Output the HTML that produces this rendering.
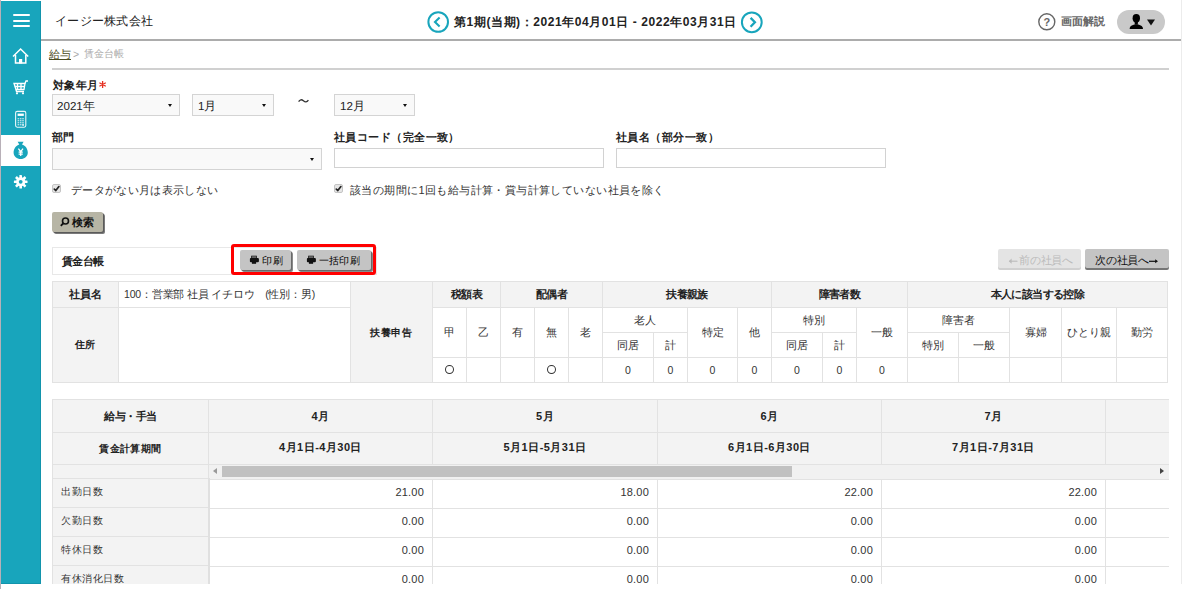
<!DOCTYPE html>
<html><head><meta charset="utf-8">
<style>
*{box-sizing:border-box;margin:0;padding:0}
html,body{width:1187px;height:589px;overflow:hidden;background:#fff}
body{position:relative;font-family:"Liberation Sans",sans-serif;color:#222;font-size:11px;line-height:1.2}
.a{position:absolute}
#lb{left:0;top:0;width:1px;height:589px;background:#b8b0b8}
#sb{left:1px;top:1px;width:40px;height:583px;background:#18a5bc}
#rl{left:1181px;top:0;width:1px;height:584px;background:#ececec}
#hdb{left:41px;top:39px;width:1140px;height:2px;background:#acacac}
.sel{position:absolute;border:1px solid #d4d4d4;background:#f9f9f9;height:22px}
.sel span{position:absolute;left:5px;top:4px;font-size:11.6px;color:#222;white-space:nowrap}
.sel i{position:absolute;right:7px;top:9px;width:0;height:0;border-left:2.6px solid transparent;border-right:2.6px solid transparent;border-top:3px solid #111}
.inp{position:absolute;border:1px solid #d2d2d2;background:#fff;height:20px}
.lbl{position:absolute;font-size:11px;font-weight:bold;color:#222;white-space:nowrap}
.cb{position:absolute;width:9px;height:9px;border:1px solid #c4c4c4;background:#e6e6e6;border-radius:2px}
.cb svg{position:absolute;left:-1px;top:-1px}
.cbt{position:absolute;font-size:11px;color:#333;white-space:nowrap}
.t{position:absolute;white-space:nowrap}
table{border-collapse:collapse;position:absolute;table-layout:fixed}
td{border:1px solid #e2e2e2;text-align:center;font-size:10px;color:#333;padding:0;white-space:nowrap;overflow:hidden}
td.h{background:#f3f3f3;font-weight:bold;color:#222}
.c{position:absolute;white-space:nowrap;overflow:hidden}
.btn{position:absolute;background:#c4c4c4;border-radius:2px;box-shadow:1px 1px 0 #6a6a6a, 2px 2px 0 #8a8a8a;font-size:11px;color:#222;text-align:center}
</style></head><body>
<div id="lb" class="a"></div>
<div id="sb" class="a"></div>
<div id="rl" class="a"></div>
<div class="a" style="left:40px;top:1px;width:1px;height:583px;background:#1294ac"></div>
<div class="a" style="left:1px;top:583px;width:40px;height:1px;background:#1294ac"></div>
<div id="hdb" class="a"></div>

<!-- sidebar icons -->
<svg class="a" style="left:1px;top:1px" width="40" height="583" viewBox="1 1 40 583">
  <g fill="#fff">
    <rect x="13" y="14" width="17" height="2" rx="1"/>
    <rect x="13" y="20" width="17" height="2" rx="1"/>
    <rect x="13" y="25" width="17" height="2" rx="1"/>
  </g>
  <!-- home -->
  <g fill="none" stroke="#fff" stroke-width="1.5" stroke-linejoin="miter">
    <path d="M13 56.5 L20.6 49 L28.2 56.5"/>
    <path d="M15.5 55 V63 H25.8 V55"/>
  </g>
  <rect x="19" y="59" width="3.2" height="4.5" fill="#fff"/>
  <!-- cart -->
  <g fill="none" stroke="#fff" stroke-width="1.3">
    <path d="M14 83.5 H25 L24 89.5 H16 Z"/>
    <path d="M17.5 83.5 V89.5 M21 83.5 V89.5 M14.8 86.5 H24.5"/>
    <path d="M25 83.5 L26 81 H28"/>
    <path d="M16 89.5 L16.5 91.5 H24"/>
  </g>
  <circle cx="17" cy="93.3" r="1.1" fill="#fff"/>
  <circle cx="23" cy="93.3" r="1.1" fill="#fff"/>
  <!-- calculator -->
  <rect x="15.6" y="111.4" width="10.2" height="15.8" rx="1.6" fill="none" stroke="#fff" stroke-width="1.1" opacity="0.9"/>
  <rect x="17.6" y="113.6" width="6.2" height="2.3" fill="#fff"/>
  <g fill="#fff" opacity="0.8"><rect x="17.6" y="118.2" width="1.6" height="1.1"/><rect x="19.9" y="118.2" width="1.6" height="1.1"/><rect x="22.2" y="118.2" width="1.6" height="1.1"/><rect x="17.6" y="120.2" width="1.6" height="1.1"/><rect x="19.9" y="120.2" width="1.6" height="1.1"/><rect x="22.2" y="120.2" width="1.6" height="1.1"/><rect x="17.6" y="122.2" width="1.6" height="1.1"/><rect x="19.9" y="122.2" width="1.6" height="1.1"/><rect x="22.2" y="122.2" width="1.6" height="1.1"/><rect x="17.6" y="124.2" width="1.6" height="1.1"/><rect x="19.9" y="124.2" width="1.6" height="1.1"/><rect x="22.2" y="124.2" width="1.6" height="1.1"/><rect x="22.4" y="123.8" width="1.4" height="2.2"/></g>
  <!-- active -->
  <rect x="1" y="135" width="39" height="31" fill="#fff"/>
  <path d="M17.6 141.8 L23.6 141.8 L22 144.5 C25.5 145.5 27.8 149 27.8 152.5 C27.8 156.5 24.5 159 20.7 159 C16.9 159 13.6 156.5 13.6 152.5 C13.6 149 15.9 145.5 19.3 144.5 Z" fill="#18a5bc"/>
  <g stroke="#fff" stroke-width="1.1" fill="none">
    <path d="M18.4 148.6 L20.7 151.6 L23 148.6 M20.7 151.6 V156 M18.6 152 H22.8 M18.6 154 H22.8" stroke-width="1.25"/>
  </g>
  <!-- gear -->
  <g transform="translate(20.7 181.8)">
    <g fill="#fff">
      <rect x="-1.3" y="-6.8" width="2.6" height="13.6" rx="0.4"/>
      <rect x="-1.3" y="-6.8" width="2.6" height="13.6" rx="0.4" transform="rotate(45)"/>
      <rect x="-1.3" y="-6.8" width="2.6" height="13.6" rx="0.4" transform="rotate(90)"/>
      <rect x="-1.3" y="-6.8" width="2.6" height="13.6" rx="0.4" transform="rotate(135)"/>
      <circle r="4.6"/>
    </g>
    <circle r="1.9" fill="#18a5bc"/>
  </g>
</svg>

<!-- header -->
<div class="t" style="left:55px;top:14px;font-size:12px;letter-spacing:0.3px;color:#222">イージー株式会社</div>
<svg class="a" style="left:426px;top:10px" width="25" height="25">
  <circle cx="12.2" cy="12" r="9.8" fill="none" stroke="#18a5bc" stroke-width="2"/>
  <path d="M13.6 7.6 L9 12 L13.6 16.4" fill="none" stroke="#18a5bc" stroke-width="2.1"/>
</svg>
<div class="t" style="left:454px;top:15px;font-size:12px;font-weight:bold;color:#222;letter-spacing:0.57px">第1期(当期)：2021年04月01日 - 2022年03月31日</div>
<svg class="a" style="left:740px;top:10px" width="25" height="25">
  <circle cx="11.8" cy="12.3" r="9.9" fill="none" stroke="#18a5bc" stroke-width="2"/>
  <path d="M10.6 7.9 L14.9 12.3 L10.6 16.7" fill="none" stroke="#18a5bc" stroke-width="2.3"/>
</svg>
<svg class="a" style="left:1037px;top:12px" width="20" height="20">
  <circle cx="9.8" cy="9.8" r="8" fill="none" stroke="#666" stroke-width="1.4"/>
  <text x="9.8" y="14" font-size="11" font-weight="bold" text-anchor="middle" fill="#666" font-family="Liberation Sans">?</text>
</svg>
<div class="t" style="left:1061px;top:15px;font-size:11px;font-weight:bold;color:#666">画面解説</div>
<div class="a" style="left:1117px;top:10px;width:48px;height:24px;border-radius:12px;background:#c9c9c9"></div>
<svg class="a" style="left:1125px;top:12px" width="36" height="20">
  <ellipse cx="11.3" cy="6.3" rx="3.7" ry="4.2" fill="#000"/>
  <path d="M4.6 16.9 C4.6 14.2 6.5 13.2 9.3 12.4 L13.3 12.4 C16.1 13.2 18 14.2 18 16.9 Z" fill="#000"/>
  <path d="M9.6 9 L13 9 L12.8 12.8 L9.8 12.8 Z" fill="#000"/>
  <path d="M22 7.5 H30 L26 13.5 Z" fill="#111"/>
</svg>

<!-- breadcrumb -->
<div class="t" style="left:49px;top:48px;font-size:10.5px;color:#4a4a20;text-decoration:underline">給与</div>
<div class="t" style="left:73px;top:48px;font-size:10.5px;color:#aaa">&gt;</div><div class="t" style="left:84px;top:48px;font-size:10.3px;color:#aaa">賃金台帳</div>
<div class="a" style="left:52px;top:68px;width:1117px;height:2px;background:#d0d0d0"></div>

<!-- form -->
<div class="lbl" style="left:53px;top:79px;letter-spacing:0.3px">対象年月</div><svg class="a" style="left:98px;top:80px" width="10" height="9"><g stroke="#e53022" stroke-width="1.3"><path d="M4.6 1 V8 M1.4 2.8 L7.8 6.2 M1.4 6.2 L7.8 2.8"/></g></svg>
<div class="sel" style="left:52px;top:94px;width:128px"><span style="left:4px">2021年</span><i></i></div>
<div class="sel" style="left:192px;top:94px;width:82px"><span>1月</span><i></i></div>
<svg class="a" style="left:297px;top:97px" width="14" height="8"><path d="M1.6 4.6 C3 2.4 4.6 2.2 6.4 3.8 C8.2 5.4 9.8 5.4 11.4 3.2" fill="none" stroke="#333" stroke-width="1.3"/></svg>
<div class="sel" style="left:334px;top:94px;width:81px"><span>12月</span><i></i></div>

<div class="lbl" style="left:52px;top:131px">部門</div>
<div class="sel" style="left:52px;top:148px;width:270px;height:22px"><i></i></div>
<div class="lbl" style="left:334px;top:131px;letter-spacing:0.45px">社員コード（完全一致）</div>
<div class="inp" style="left:334px;top:148px;width:270px"></div>
<div class="lbl" style="left:616px;top:131px;letter-spacing:0.45px">社員名（部分一致）</div>
<div class="inp" style="left:616px;top:148px;width:270px"></div>

<div class="cb" style="left:52px;top:184px"><svg width="9" height="9"><path d="M2.3 5.2 L3.8 6.6 L6.9 2.6" fill="none" stroke="#222" stroke-width="1.7" stroke-linecap="round"/></svg></div>
<div class="cbt" style="left:71px;top:184px;letter-spacing:0.35px">データがない月は表示しない</div>
<div class="cb" style="left:334px;top:184px"><svg width="9" height="9"><path d="M2.3 5.2 L3.8 6.6 L6.9 2.6" fill="none" stroke="#222" stroke-width="1.7" stroke-linecap="round"/></svg></div>
<div class="cbt" style="left:350px;top:184px;letter-spacing:0.41px">該当の期間に1回も給与計算・賞与計算していない社員を除く</div>

<div class="a" style="left:52px;top:212px;width:51px;height:20px;background:#b7b5a5;border-radius:2px;box-shadow:1px 1px 0 #5a5a5a, 2px 2px 0 #7a7a7a"></div>
<svg class="a" style="left:59px;top:216px" width="12" height="12">
  <circle cx="6.5" cy="5" r="3" fill="none" stroke="#111" stroke-width="1.6"/>
  <path d="M4.6 7 L1.8 9.8" stroke="#111" stroke-width="1.8"/>
</svg>
<div class="t" style="left:72px;top:216px;font-size:10.5px;color:#111;letter-spacing:-0.5px;font-weight:bold">検索</div>

<!-- panel -->
<div class="a" style="left:52px;top:247px;width:325px;height:28px;border:1px solid #e8e8e8"></div>
<div class="t" style="left:62px;top:255px;font-size:11px;font-weight:bold;color:#222;letter-spacing:-0.6px">賃金台帳</div>
<div class="a" style="left:231px;top:244px;width:145px;height:31px;border:3px solid #f00;border-radius:3px"></div>
<div class="btn" style="left:240px;top:250px;width:51px;height:20px"></div>
<div class="btn" style="left:297px;top:250px;width:74px;height:20px"></div>
<svg class="a" style="left:249px;top:255px" width="11" height="10"><path d="M2.2 0.7 H7.8 V3.2 H2.2Z" fill="#111"/><rect x="3" y="1.6" width="4" height="0.9" fill="#bbb"/><rect x="0.9" y="3" width="9" height="4.2" rx="1" fill="#111"/><rect x="2.9" y="6.5" width="4.2" height="2.3" fill="#111"/></svg><div class="t" style="left:262px;top:254.5px;font-size:10.3px;color:#000;letter-spacing:0.5px">印刷</div>
<svg class="a" style="left:306px;top:255px" width="11" height="10"><path d="M2.2 0.7 H7.8 V3.2 H2.2Z" fill="#111"/><rect x="3" y="1.6" width="4" height="0.9" fill="#bbb"/><rect x="0.9" y="3" width="9" height="4.2" rx="1" fill="#111"/><rect x="2.9" y="6.5" width="4.2" height="2.3" fill="#111"/></svg><div class="t" style="left:319px;top:254.5px;font-size:10.3px;color:#000;letter-spacing:0.2px">一括印刷</div>

<div class="a" style="left:998px;top:249px;width:83px;height:19px;background:#e4e4e4;border-radius:2px;box-shadow:0 2px 0 #d0d0d0"></div>
<svg class="a" style="left:1008px;top:257px" width="11" height="8"><path d="M1 4.2 H9.5" stroke="#bbb" stroke-width="1.1"/><path d="M0.8 4.2 L3.6 1.6 L3.6 6.8 Z" fill="#bbb"/></svg>
<div class="t" style="left:1019px;top:254px;font-size:10.5px;color:#bbb;letter-spacing:-0.2px">前の社員へ</div>
<div class="a" style="left:1085px;top:249px;width:84px;height:19px;background:#c4c4c4;border-radius:2px;box-shadow:0 2px 0 #767676"></div>
<div class="t" style="left:1095px;top:254px;font-size:10.5px;color:#111;letter-spacing:-0.2px">次の社員へ</div>
<svg class="a" style="left:1148px;top:257px" width="11" height="8"><path d="M1 4.3 H8.5" stroke="#111" stroke-width="1.2"/><path d="M10 4.3 L7.2 2.3 L7.2 6.3 Z" fill="#111"/></svg>

<div class="c" style="left:52px;top:281px;width:67px;height:27px;background:#f3f3f3;border:1px solid #e2e2e2;"></div>
<div class="c" style="left:53px;top:282px;width:65px;height:25px;line-height:25px;text-align:center;font-size:11px;color:#222;font-weight:bold;letter-spacing:-0.3px;">社員名</div>
<div class="c" style="left:118px;top:281px;width:233px;height:27px;background:#fff;border:1px solid #e2e2e2;"></div>
<div class="c" style="left:119px;top:282px;width:231px;height:25px;line-height:25px;text-align:left;font-size:10.5px;color:#333;letter-spacing:-0.2px;padding-left:5px;">100：営業部 社員 イチロウ　(性別：男)</div>
<div class="c" style="left:52px;top:307px;width:67px;height:76px;background:#f3f3f3;border:1px solid #e2e2e2;"></div>
<div class="c" style="left:53px;top:308px;width:65px;height:74px;line-height:74px;text-align:center;font-size:10px;color:#222;font-weight:bold;letter-spacing:0.3px;">住所</div>
<div class="c" style="left:118px;top:307px;width:233px;height:76px;background:#fff;border:1px solid #e2e2e2;"></div>
<div class="c" style="left:350px;top:281px;width:83px;height:102px;background:#f3f3f3;border:1px solid #e2e2e2;"></div>
<div class="c" style="left:351px;top:283px;width:81px;height:100px;line-height:100px;text-align:center;font-size:10px;color:#222;font-weight:bold;letter-spacing:0.8px;">扶養申告</div>
<div class="c" style="left:432px;top:281px;width:69px;height:27px;background:#f3f3f3;border:1px solid #e2e2e2;"></div>
<div class="c" style="left:433px;top:282px;width:67px;height:25px;line-height:25px;text-align:center;font-size:11px;color:#222;font-weight:bold;letter-spacing:-0.6px;">税額表</div>
<div class="c" style="left:500px;top:281px;width:103px;height:27px;background:#f3f3f3;border:1px solid #e2e2e2;"></div>
<div class="c" style="left:501px;top:282px;width:101px;height:25px;line-height:25px;text-align:center;font-size:11px;color:#222;font-weight:bold;letter-spacing:-0.6px;">配偶者</div>
<div class="c" style="left:602px;top:281px;width:170px;height:27px;background:#f3f3f3;border:1px solid #e2e2e2;"></div>
<div class="c" style="left:603px;top:282px;width:168px;height:25px;line-height:25px;text-align:center;font-size:11px;color:#222;font-weight:bold;letter-spacing:-0.6px;">扶養親族</div>
<div class="c" style="left:771px;top:281px;width:137px;height:27px;background:#f3f3f3;border:1px solid #e2e2e2;"></div>
<div class="c" style="left:772px;top:282px;width:135px;height:25px;line-height:25px;text-align:center;font-size:11px;color:#222;font-weight:bold;letter-spacing:-0.6px;">障害者数</div>
<div class="c" style="left:907px;top:281px;width:261px;height:27px;background:#f3f3f3;border:1px solid #e2e2e2;"></div>
<div class="c" style="left:908px;top:282px;width:259px;height:25px;line-height:25px;text-align:center;font-size:11px;color:#222;font-weight:bold;letter-spacing:-0.6px;">本人に該当する控除</div>
<div class="c" style="left:432px;top:307px;width:35px;height:51px;background:#fff;border:1px solid #e2e2e2;"></div>
<div class="c" style="left:433px;top:308px;width:33px;height:49px;line-height:49px;text-align:center;font-size:10.8px;color:#333;">甲</div>
<div class="c" style="left:432px;top:357px;width:35px;height:26px;background:#fff;border:1px solid #e2e2e2;"></div>
<div class="a" style="left:444.5px;top:364.9px;width:9.4px;height:9.2px;border:1.1px solid #333;border-radius:50%"></div>
<div class="c" style="left:466px;top:307px;width:35px;height:51px;background:#fff;border:1px solid #e2e2e2;"></div>
<div class="c" style="left:467px;top:308px;width:33px;height:49px;line-height:49px;text-align:center;font-size:10.8px;color:#333;">乙</div>
<div class="c" style="left:466px;top:357px;width:35px;height:26px;background:#fff;border:1px solid #e2e2e2;"></div>
<div class="c" style="left:500px;top:307px;width:35px;height:51px;background:#fff;border:1px solid #e2e2e2;"></div>
<div class="c" style="left:501px;top:308px;width:33px;height:49px;line-height:49px;text-align:center;font-size:10.8px;color:#333;">有</div>
<div class="c" style="left:500px;top:357px;width:35px;height:26px;background:#fff;border:1px solid #e2e2e2;"></div>
<div class="c" style="left:534px;top:307px;width:35px;height:51px;background:#fff;border:1px solid #e2e2e2;"></div>
<div class="c" style="left:535px;top:308px;width:33px;height:49px;line-height:49px;text-align:center;font-size:10.8px;color:#333;">無</div>
<div class="c" style="left:534px;top:357px;width:35px;height:26px;background:#fff;border:1px solid #e2e2e2;"></div>
<div class="a" style="left:546.5px;top:364.9px;width:9.4px;height:9.2px;border:1.1px solid #333;border-radius:50%"></div>
<div class="c" style="left:568px;top:307px;width:35px;height:51px;background:#fff;border:1px solid #e2e2e2;"></div>
<div class="c" style="left:569px;top:308px;width:33px;height:49px;line-height:49px;text-align:center;font-size:10.8px;color:#333;">老</div>
<div class="c" style="left:568px;top:357px;width:35px;height:26px;background:#fff;border:1px solid #e2e2e2;"></div>
<div class="c" style="left:687px;top:307px;width:51px;height:51px;background:#fff;border:1px solid #e2e2e2;"></div>
<div class="c" style="left:688px;top:308px;width:49px;height:49px;line-height:49px;text-align:center;font-size:10.8px;color:#333;">特定</div>
<div class="c" style="left:687px;top:357px;width:51px;height:26px;background:#fff;border:1px solid #e2e2e2;"></div>
<div class="c" style="left:688px;top:358px;width:49px;height:24px;line-height:24px;text-align:center;font-size:10.5px;color:#333;">0</div>
<div class="c" style="left:737px;top:307px;width:35px;height:51px;background:#fff;border:1px solid #e2e2e2;"></div>
<div class="c" style="left:738px;top:308px;width:33px;height:49px;line-height:49px;text-align:center;font-size:10.8px;color:#333;">他</div>
<div class="c" style="left:737px;top:357px;width:35px;height:26px;background:#fff;border:1px solid #e2e2e2;"></div>
<div class="c" style="left:738px;top:358px;width:33px;height:24px;line-height:24px;text-align:center;font-size:10.5px;color:#333;">0</div>
<div class="c" style="left:856px;top:307px;width:52px;height:51px;background:#fff;border:1px solid #e2e2e2;"></div>
<div class="c" style="left:857px;top:308px;width:50px;height:49px;line-height:49px;text-align:center;font-size:10.8px;color:#333;">一般</div>
<div class="c" style="left:856px;top:357px;width:52px;height:26px;background:#fff;border:1px solid #e2e2e2;"></div>
<div class="c" style="left:857px;top:358px;width:50px;height:24px;line-height:24px;text-align:center;font-size:10.5px;color:#333;">0</div>
<div class="c" style="left:1009px;top:307px;width:53px;height:51px;background:#fff;border:1px solid #e2e2e2;"></div>
<div class="c" style="left:1010px;top:308px;width:51px;height:49px;line-height:49px;text-align:center;font-size:10.8px;color:#333;">寡婦</div>
<div class="c" style="left:1009px;top:357px;width:53px;height:26px;background:#fff;border:1px solid #e2e2e2;"></div>
<div class="c" style="left:1061px;top:307px;width:56px;height:51px;background:#fff;border:1px solid #e2e2e2;"></div>
<div class="c" style="left:1062px;top:308px;width:54px;height:49px;line-height:49px;text-align:center;font-size:10.8px;color:#333;">ひとり親</div>
<div class="c" style="left:1061px;top:357px;width:56px;height:26px;background:#fff;border:1px solid #e2e2e2;"></div>
<div class="c" style="left:1116px;top:307px;width:52px;height:51px;background:#fff;border:1px solid #e2e2e2;"></div>
<div class="c" style="left:1117px;top:308px;width:50px;height:49px;line-height:49px;text-align:center;font-size:10.8px;color:#333;">勤労</div>
<div class="c" style="left:1116px;top:357px;width:52px;height:26px;background:#fff;border:1px solid #e2e2e2;"></div>
<div class="c" style="left:602px;top:307px;width:86px;height:26px;background:#fff;border:1px solid #e2e2e2;"></div>
<div class="c" style="left:603px;top:308px;width:84px;height:24px;line-height:24px;text-align:center;font-size:10.8px;color:#333;">老人</div>
<div class="c" style="left:602px;top:332px;width:52px;height:26px;background:#fff;border:1px solid #e2e2e2;"></div>
<div class="c" style="left:603px;top:333px;width:50px;height:24px;line-height:24px;text-align:center;font-size:10.8px;color:#333;">同居</div>
<div class="c" style="left:602px;top:357px;width:52px;height:26px;background:#fff;border:1px solid #e2e2e2;"></div>
<div class="c" style="left:603px;top:358px;width:50px;height:24px;line-height:24px;text-align:center;font-size:10.5px;color:#333;">0</div>
<div class="c" style="left:653px;top:332px;width:35px;height:26px;background:#fff;border:1px solid #e2e2e2;"></div>
<div class="c" style="left:654px;top:333px;width:33px;height:24px;line-height:24px;text-align:center;font-size:10.8px;color:#333;">計</div>
<div class="c" style="left:653px;top:357px;width:35px;height:26px;background:#fff;border:1px solid #e2e2e2;"></div>
<div class="c" style="left:654px;top:358px;width:33px;height:24px;line-height:24px;text-align:center;font-size:10.5px;color:#333;">0</div>
<div class="c" style="left:771px;top:307px;width:86px;height:26px;background:#fff;border:1px solid #e2e2e2;"></div>
<div class="c" style="left:772px;top:308px;width:84px;height:24px;line-height:24px;text-align:center;font-size:10.8px;color:#333;">特別</div>
<div class="c" style="left:771px;top:332px;width:52px;height:26px;background:#fff;border:1px solid #e2e2e2;"></div>
<div class="c" style="left:772px;top:333px;width:50px;height:24px;line-height:24px;text-align:center;font-size:10.8px;color:#333;">同居</div>
<div class="c" style="left:771px;top:357px;width:52px;height:26px;background:#fff;border:1px solid #e2e2e2;"></div>
<div class="c" style="left:772px;top:358px;width:50px;height:24px;line-height:24px;text-align:center;font-size:10.5px;color:#333;">0</div>
<div class="c" style="left:822px;top:332px;width:35px;height:26px;background:#fff;border:1px solid #e2e2e2;"></div>
<div class="c" style="left:823px;top:333px;width:33px;height:24px;line-height:24px;text-align:center;font-size:10.8px;color:#333;">計</div>
<div class="c" style="left:822px;top:357px;width:35px;height:26px;background:#fff;border:1px solid #e2e2e2;"></div>
<div class="c" style="left:823px;top:358px;width:33px;height:24px;line-height:24px;text-align:center;font-size:10.5px;color:#333;">0</div>
<div class="c" style="left:907px;top:307px;width:103px;height:26px;background:#fff;border:1px solid #e2e2e2;"></div>
<div class="c" style="left:908px;top:308px;width:101px;height:24px;line-height:24px;text-align:center;font-size:10.8px;color:#333;">障害者</div>
<div class="c" style="left:907px;top:332px;width:52px;height:26px;background:#fff;border:1px solid #e2e2e2;"></div>
<div class="c" style="left:908px;top:333px;width:50px;height:24px;line-height:24px;text-align:center;font-size:10.8px;color:#333;">特別</div>
<div class="c" style="left:907px;top:357px;width:52px;height:26px;background:#fff;border:1px solid #e2e2e2;"></div>
<div class="c" style="left:958px;top:332px;width:52px;height:26px;background:#fff;border:1px solid #e2e2e2;"></div>
<div class="c" style="left:959px;top:333px;width:50px;height:24px;line-height:24px;text-align:center;font-size:10.8px;color:#333;">一般</div>
<div class="c" style="left:958px;top:357px;width:52px;height:26px;background:#fff;border:1px solid #e2e2e2;"></div>
<div class="c" style="left:52px;top:399px;width:157px;height:34px;background:#f3f3f3;border:1px solid #e2e2e2;"></div>
<div class="c" style="left:53px;top:400px;width:155px;height:32px;line-height:32px;text-align:center;font-size:11px;color:#222;font-weight:bold;letter-spacing:-0.5px;">給与・手当</div>
<div class="c" style="left:52px;top:432px;width:157px;height:33px;background:#f3f3f3;border:1px solid #e2e2e2;"></div>
<div class="c" style="left:53px;top:433px;width:155px;height:31px;line-height:31px;text-align:center;font-size:10px;color:#222;font-weight:bold;letter-spacing:0.4px;">賃金計算期間</div>
<div class="c" style="left:208px;top:399px;width:225px;height:34px;background:#f3f3f3;border:1px solid #e2e2e2;"></div>
<div class="c" style="left:209px;top:400px;width:223px;height:32px;line-height:32px;text-align:center;font-size:11px;color:#222;font-weight:bold;letter-spacing:0.5px;">4月</div>
<div class="c" style="left:208px;top:432px;width:225px;height:33px;background:#f3f3f3;border:1px solid #e2e2e2;"></div>
<div class="c" style="left:209px;top:432px;width:223px;height:31px;line-height:31px;text-align:center;font-size:11px;color:#222;font-weight:bold;letter-spacing:0.47px;">4月1日-4月30日</div>
<div class="c" style="left:432px;top:399px;width:226px;height:34px;background:#f3f3f3;border:1px solid #e2e2e2;"></div>
<div class="c" style="left:433px;top:400px;width:224px;height:32px;line-height:32px;text-align:center;font-size:11px;color:#222;font-weight:bold;letter-spacing:0.5px;">5月</div>
<div class="c" style="left:432px;top:432px;width:226px;height:33px;background:#f3f3f3;border:1px solid #e2e2e2;"></div>
<div class="c" style="left:433px;top:432px;width:224px;height:31px;line-height:31px;text-align:center;font-size:11px;color:#222;font-weight:bold;letter-spacing:0.47px;">5月1日-5月31日</div>
<div class="c" style="left:657px;top:399px;width:225px;height:34px;background:#f3f3f3;border:1px solid #e2e2e2;"></div>
<div class="c" style="left:658px;top:400px;width:223px;height:32px;line-height:32px;text-align:center;font-size:11px;color:#222;font-weight:bold;letter-spacing:0.5px;">6月</div>
<div class="c" style="left:657px;top:432px;width:225px;height:33px;background:#f3f3f3;border:1px solid #e2e2e2;"></div>
<div class="c" style="left:658px;top:432px;width:223px;height:31px;line-height:31px;text-align:center;font-size:11px;color:#222;font-weight:bold;letter-spacing:0.47px;">6月1日-6月30日</div>
<div class="c" style="left:881px;top:399px;width:225px;height:34px;background:#f3f3f3;border:1px solid #e2e2e2;"></div>
<div class="c" style="left:882px;top:400px;width:223px;height:32px;line-height:32px;text-align:center;font-size:11px;color:#222;font-weight:bold;letter-spacing:0.5px;">7月</div>
<div class="c" style="left:881px;top:432px;width:225px;height:33px;background:#f3f3f3;border:1px solid #e2e2e2;"></div>
<div class="c" style="left:882px;top:432px;width:223px;height:31px;line-height:31px;text-align:center;font-size:11px;color:#222;font-weight:bold;letter-spacing:0.47px;">7月1日-7月31日</div>
<div class="c" style="left:1105px;top:399px;width:65px;height:34px;background:#f3f3f3;border:1px solid #e2e2e2;"></div>
<div class="c" style="left:1105px;top:432px;width:65px;height:33px;background:#f3f3f3;border:1px solid #e2e2e2;"></div>
<div class="c" style="left:52px;top:464px;width:157px;height:16px;background:#f3f3f3;border:1px solid #e2e2e2;"></div>
<div class="c" style="left:52px;top:478px;width:157px;height:30px;background:#f3f3f3;border:1px solid #e2e2e2;"></div>
<div class="c" style="left:53px;top:478px;width:155px;height:28px;line-height:28px;text-align:left;font-size:10px;color:#333;letter-spacing:0.5px;padding-left:8px;">出勤日数</div>
<div class="c" style="left:208px;top:479px;width:225px;height:30px;background:#fff;border:1px solid #e2e2e2;"></div>
<div class="c" style="left:209px;top:478px;width:223px;height:28px;line-height:28px;text-align:right;font-size:11px;color:#333;letter-spacing:0.2px;padding-right:8px;">21.00</div>
<div class="c" style="left:432px;top:479px;width:226px;height:30px;background:#fff;border:1px solid #e2e2e2;"></div>
<div class="c" style="left:433px;top:478px;width:224px;height:28px;line-height:28px;text-align:right;font-size:11px;color:#333;letter-spacing:0.2px;padding-right:8px;">18.00</div>
<div class="c" style="left:657px;top:479px;width:225px;height:30px;background:#fff;border:1px solid #e2e2e2;"></div>
<div class="c" style="left:658px;top:478px;width:223px;height:28px;line-height:28px;text-align:right;font-size:11px;color:#333;letter-spacing:0.2px;padding-right:8px;">22.00</div>
<div class="c" style="left:881px;top:479px;width:225px;height:30px;background:#fff;border:1px solid #e2e2e2;"></div>
<div class="c" style="left:882px;top:478px;width:223px;height:28px;line-height:28px;text-align:right;font-size:11px;color:#333;letter-spacing:0.2px;padding-right:8px;">22.00</div>
<div class="c" style="left:1105px;top:479px;width:65px;height:30px;background:#fff;border:1px solid #e2e2e2;"></div>
<div class="c" style="left:52px;top:507px;width:157px;height:30px;background:#f3f3f3;border:1px solid #e2e2e2;"></div>
<div class="c" style="left:53px;top:507px;width:155px;height:28px;line-height:28px;text-align:left;font-size:10px;color:#333;letter-spacing:0.5px;padding-left:8px;">欠勤日数</div>
<div class="c" style="left:208px;top:508px;width:225px;height:30px;background:#fff;border:1px solid #e2e2e2;"></div>
<div class="c" style="left:209px;top:507px;width:223px;height:28px;line-height:28px;text-align:right;font-size:11px;color:#333;letter-spacing:0.2px;padding-right:8px;">0.00</div>
<div class="c" style="left:432px;top:508px;width:226px;height:30px;background:#fff;border:1px solid #e2e2e2;"></div>
<div class="c" style="left:433px;top:507px;width:224px;height:28px;line-height:28px;text-align:right;font-size:11px;color:#333;letter-spacing:0.2px;padding-right:8px;">0.00</div>
<div class="c" style="left:657px;top:508px;width:225px;height:30px;background:#fff;border:1px solid #e2e2e2;"></div>
<div class="c" style="left:658px;top:507px;width:223px;height:28px;line-height:28px;text-align:right;font-size:11px;color:#333;letter-spacing:0.2px;padding-right:8px;">0.00</div>
<div class="c" style="left:881px;top:508px;width:225px;height:30px;background:#fff;border:1px solid #e2e2e2;"></div>
<div class="c" style="left:882px;top:507px;width:223px;height:28px;line-height:28px;text-align:right;font-size:11px;color:#333;letter-spacing:0.2px;padding-right:8px;">0.00</div>
<div class="c" style="left:1105px;top:508px;width:65px;height:30px;background:#fff;border:1px solid #e2e2e2;"></div>
<div class="c" style="left:52px;top:536px;width:157px;height:30px;background:#f3f3f3;border:1px solid #e2e2e2;"></div>
<div class="c" style="left:53px;top:536px;width:155px;height:28px;line-height:28px;text-align:left;font-size:10px;color:#333;letter-spacing:0.5px;padding-left:8px;">特休日数</div>
<div class="c" style="left:208px;top:537px;width:225px;height:30px;background:#fff;border:1px solid #e2e2e2;"></div>
<div class="c" style="left:209px;top:536px;width:223px;height:28px;line-height:28px;text-align:right;font-size:11px;color:#333;letter-spacing:0.2px;padding-right:8px;">0.00</div>
<div class="c" style="left:432px;top:537px;width:226px;height:30px;background:#fff;border:1px solid #e2e2e2;"></div>
<div class="c" style="left:433px;top:536px;width:224px;height:28px;line-height:28px;text-align:right;font-size:11px;color:#333;letter-spacing:0.2px;padding-right:8px;">0.00</div>
<div class="c" style="left:657px;top:537px;width:225px;height:30px;background:#fff;border:1px solid #e2e2e2;"></div>
<div class="c" style="left:658px;top:536px;width:223px;height:28px;line-height:28px;text-align:right;font-size:11px;color:#333;letter-spacing:0.2px;padding-right:8px;">0.00</div>
<div class="c" style="left:881px;top:537px;width:225px;height:30px;background:#fff;border:1px solid #e2e2e2;"></div>
<div class="c" style="left:882px;top:536px;width:223px;height:28px;line-height:28px;text-align:right;font-size:11px;color:#333;letter-spacing:0.2px;padding-right:8px;">0.00</div>
<div class="c" style="left:1105px;top:537px;width:65px;height:30px;background:#fff;border:1px solid #e2e2e2;"></div>
<div class="c" style="left:52px;top:565px;width:157px;height:30px;background:#f3f3f3;border:1px solid #e2e2e2;"></div>
<div class="c" style="left:53px;top:565px;width:155px;height:28px;line-height:28px;text-align:left;font-size:10px;color:#333;letter-spacing:0.5px;padding-left:8px;">有休消化日数</div>
<div class="c" style="left:208px;top:566px;width:225px;height:30px;background:#fff;border:1px solid #e2e2e2;"></div>
<div class="c" style="left:209px;top:565px;width:223px;height:28px;line-height:28px;text-align:right;font-size:11px;color:#333;letter-spacing:0.2px;padding-right:8px;">0.00</div>
<div class="c" style="left:432px;top:566px;width:226px;height:30px;background:#fff;border:1px solid #e2e2e2;"></div>
<div class="c" style="left:433px;top:565px;width:224px;height:28px;line-height:28px;text-align:right;font-size:11px;color:#333;letter-spacing:0.2px;padding-right:8px;">0.00</div>
<div class="c" style="left:657px;top:566px;width:225px;height:30px;background:#fff;border:1px solid #e2e2e2;"></div>
<div class="c" style="left:658px;top:565px;width:223px;height:28px;line-height:28px;text-align:right;font-size:11px;color:#333;letter-spacing:0.2px;padding-right:8px;">0.00</div>
<div class="c" style="left:881px;top:566px;width:225px;height:30px;background:#fff;border:1px solid #e2e2e2;"></div>
<div class="c" style="left:882px;top:565px;width:223px;height:28px;line-height:28px;text-align:right;font-size:11px;color:#333;letter-spacing:0.2px;padding-right:8px;">0.00</div>
<div class="c" style="left:1105px;top:566px;width:65px;height:30px;background:#fff;border:1px solid #e2e2e2;"></div>
<div class="a" style="left:1169px;top:398px;width:12px;height:190px;background:#fff"></div>
<div class="a" style="left:209px;top:465px;width:960px;height:14px;background:#f1f1f1"></div>
<div class="a" style="left:222px;top:466px;width:570px;height:11px;background:#c1c1c1"></div>
<div class="a" style="left:213px;top:468px;width:0;height:0;border-top:3.5px solid transparent;border-bottom:3.5px solid transparent;border-right:4px solid #999"></div>
<div class="a" style="left:1160px;top:468px;width:0;height:0;border-top:3.5px solid transparent;border-bottom:3.5px solid transparent;border-left:4px solid #444"></div>
<div class="a" style="left:208px;top:478px;width:2px;height:110px;background:#e0e0e0"></div>

<div class="a" style="left:1px;top:584px;width:1186px;height:5px;background:#fff"></div>
</body></html>
